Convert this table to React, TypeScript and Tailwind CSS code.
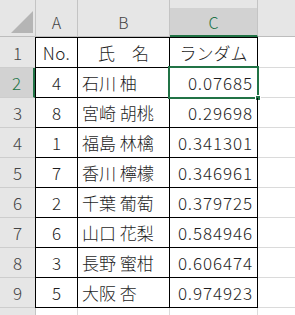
import React from "react";

const rows: [number, string, string][] = [
  [4, "石川 柚", "0.07685"],
  [8, "宮崎 胡桃", "0.29698"],
  [1, "福島 林檎", "0.341301"],
  [7, "香川 檸檬", "0.346961"],
  [2, "千葉 葡萄", "0.379725"],
  [6, "山口 花梨", "0.584946"],
  [3, "長野 蜜柑", "0.606474"],
  [5, "大阪 杏", "0.974923"],
];

const font = { fontFamily: '"Noto Sans CJK JP", "Noto Sans", sans-serif' };

export default function App() {
  return (
    <div
      className="w-[295px] h-[315px] overflow-hidden bg-white text-[#1e1e1e] font-light"
      style={font}
    >
      {/* column header */}
      <div className="grid grid-cols-[35px_43px_92px_88px_1fr] h-[37px] bg-[#e6e6e6] text-[#444] text-[16px]">
        <div className="h-[37px] border-b border-[#bdbdbd] flex items-end justify-end pr-[2px] pb-[3px]">
          <svg width="22" height="22" viewBox="0 0 22 22">
            <polygon points="22,0 22,22 0,22" fill="#b5b5b5" />
          </svg>
        </div>
        <div className="h-[37px] pt-[8px] border-l border-r border-b border-[#c4c4c4] border-b-[#bdbdbd] flex items-center justify-center leading-none">
          A
        </div>
        <div className="h-[37px] pt-[8px] border-r border-b border-[#c4c4c4] border-b-[#bdbdbd] flex items-center justify-center leading-none">
          B
        </div>
        <div className="h-[37px] pt-[8px] border-r border-[#c4c4c4] border-b-2 border-b-[#217346]">
          <div className="h-full bg-[#d2d2d2] flex items-center justify-center leading-none text-[#217346]">
            C
          </div>
        </div>
        <div className="h-[37px] border-b border-[#bdbdbd]" />
      </div>

      {/* row 1 */}
      <div className="grid grid-cols-[35px_43px_92px_88px_1fr] h-[31px] text-[17px]">
        <div className="bg-[#e6e6e6] border-b border-[#cdcdcd] flex items-center justify-center text-[17px] text-[#444] leading-none">
          1
        </div>
        <div className="border-l border-r border-t border-b border-black flex items-center justify-center leading-none tracking-[0.5px]">
          No.
        </div>
        <div className="border-r border-t border-b border-black flex items-center justify-center leading-none">
          氏　名
        </div>
        <div className="border-r border-t border-b border-black flex items-center justify-center leading-none">
          ランダム
        </div>
        <div className="border-b border-[#dadada]" />
      </div>

      {rows.map(([no, name, val], i) => {
        const active = i === 0;
        return (
          <div
            key={i}
            className="grid grid-cols-[35px_43px_92px_88px_1fr] h-[30px] text-[17px]"
          >
            <div
              className={
                active
                  ? "bg-[#d2d2d2] border-b border-[#cdcdcd] border-r-2 border-r-[#217346] flex items-center justify-center text-[17px] text-[#217346] leading-none"
                  : "bg-[#e6e6e6] border-b border-[#cdcdcd] flex items-center justify-center text-[17px] text-[#444] leading-none"
              }
            >
              {i + 2}
            </div>
            <div className="border-l border-r border-b border-black flex items-center justify-center leading-none">
              {no}
            </div>
            <div className="border-r border-b border-black flex items-center pl-[4px] leading-none whitespace-nowrap">
              {name}
            </div>
            <div className="relative border-r border-b border-black flex items-center justify-end pr-[4px] leading-none tracking-[0.9px]">
              {val}
              {active && (
                <div className="absolute -left-[2px] -top-[2px] -right-[2px] -bottom-[2px] border-2 border-[#217346]">
                  <div className="absolute -right-[4px] -bottom-[4px] w-[6px] h-[6px] bg-[#217346] border border-white" />
                </div>
              )}
            </div>
            <div className="border-b border-[#dadada]" />
          </div>
        );
      })}

      {/* row 10 */}
      <div className="grid grid-cols-[35px_43px_92px_88px_1fr] h-[7px]">
        <div className="bg-[#e6e6e6]" />
        <div className="border-l border-r border-[#c4c4c4] border-r-[#dadada]" />
        <div className="border-r border-[#dadada]" />
        <div className="border-r border-[#dadada]" />
        <div />
      </div>
    </div>
  );
}
